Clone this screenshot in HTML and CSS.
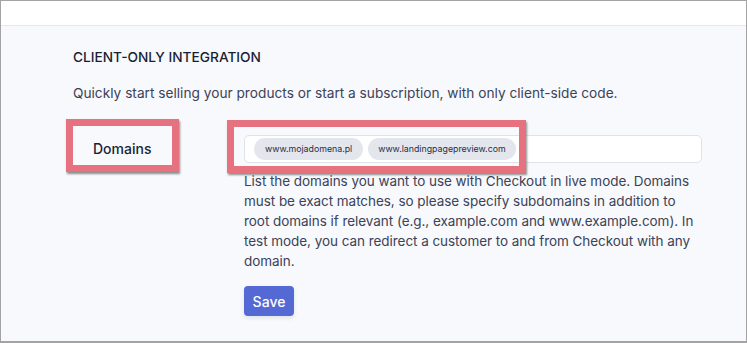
FILE: index.html
```html
<!DOCTYPE html>
<html lang="en">
<head>
    <meta charset="UTF-8">
    <meta name="viewport" content="width=device-width, initial-scale=1.0">
    <title>Checkout settings</title>
    <link rel="stylesheet" href="styles.css">
</head>
<body>
    <div class="frame">
        <div class="topbar"></div>

        <div class="section">
            <h2 class="section-title">Client-only integration</h2>
            <p class="section-desc">Quickly start selling your products or start a subscription, with only client-side code.</p>

            <div class="row">
                <div class="label">Domains</div>
                <div class="field">
                    <div class="tag-input">
                        <span class="chip">www.mojadomena.pl</span>
                        <span class="chip">www.landingpagepreview.com</span>
                    </div>
                    <p class="help">List the domains you want to use with Checkout in live mode. Domains<br>
                        must be exact matches, so please specify subdomains in addition to<br>
                        root domains if relevant (e.g., example.com and www.example.com). In<br>
                        test mode, you can redirect a customer to and from Checkout with any<br>
                        domain.</p>
                    <button class="save">Save</button>
                </div>

                <!-- annotation highlights -->
                <div class="mark mark-label"></div>
                <div class="mark mark-chips"></div>
            </div>
        </div>
    </div>
</body>
</html>
```

FILE: styles.css
```css
* {
    box-sizing: border-box;
}

body {
    margin: 0;
    font-family: Inter, "Noto Sans", sans-serif;
    color: #3c4257;
}

.frame {
    height: 343px;
    border: 1px solid #a3a3a3;
    border-bottom-width: 2px;
    background-color: #f7f9fc;
    overflow: hidden;
}

.topbar {
    height: 25px;
    background-color: white;
    border-bottom: 1px solid #e3e8ee;
}

.section {
    padding: 23px 0 0 72px;
}

.section-title {
    margin: 0;
    font-size: 13.7px;
    font-weight: 500;
    line-height: 16px;
    text-transform: uppercase;
    color: #1a1f36;
}

.section-desc {
    margin: 19px 0 0;
    font-size: 13.7px;
    line-height: 18px;
    color: #3c4257;
}

.row {
    position: relative;
    display: flex;
    margin-top: 33px;
}

.label {
    width: 171px;
    padding-left: 20px;
    font-size: 14px;
    font-weight: 500;
    line-height: 28px;
    color: #1a1f36;
}

.field {
    width: 458px;
}

.tag-input {
    display: flex;
    gap: 5px;
    height: 28px;
    padding: 2px 9px;
    background-color: white;
    border: 1px solid #dfe3e9;
    border-radius: 5px;
}

.chip {
    height: 22px;
    padding: 0 10px;
    font-size: 8.8px;
    line-height: 22px;
    color: #2a2f45;
    background-color: #e3e6ec;
    border-radius: 11px;
}

.chip:first-child {
    padding: 0 11px;
}

.help {
    margin: 8px 0 0;
    font-size: 13.5px;
    letter-spacing: -0.05px;
    line-height: 20px;
    white-space: nowrap;
    color: #3c4257;
}

.save {
    margin-top: 15px;
    width: 50px;
    height: 30px;
    font-family: inherit;
    font-size: 14px;
    font-weight: 500;
    color: white;
    background-color: #5469d4;
    border: none;
    border-radius: 4px;
    box-shadow: 0 2px 4px rgba(60, 66, 87, 0.12);
}

.mark {
    position: absolute;
    border: 7px solid #e6717f;
    box-shadow: 1px 2px 2px rgba(50, 50, 50, 0.55);
}

.mark-label {
    left: -7px;
    top: -16px;
    width: 113px;
    height: 53px;
}

.mark-chips {
    left: 154px;
    top: -15px;
    width: 299px;
    height: 53px;
}
```
